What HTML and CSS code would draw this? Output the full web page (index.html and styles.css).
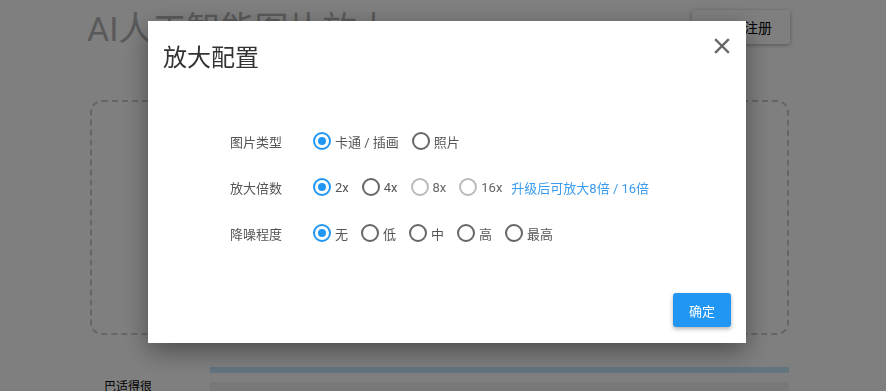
FILE: index.html
```html
<!DOCTYPE html>
<html lang="zh-CN">
<head>
    <meta charset="UTF-8">
    <title>AI人工智能图片放大</title>
    <link rel="stylesheet" href="styles.css">
</head>
<body>
    <div class="page">
        <header class="top">
            <h1>AI人工智能图片放大</h1>
            <button class="login">登录/注册</button>
        </header>
        <div class="drop"></div>
        <div class="review">
            <div class="who">巴适得很</div>
            <div class="lines">
                <div class="stripe"></div>
                <div class="grey"></div>
            </div>
        </div>
    </div>

    <div class="overlay">
        <div class="dialog">
            <div class="dialog-head">
                <h2>放大配置</h2>
                <span class="close">
                    <svg width="16" height="16" viewBox="0 0 16 16"><path d="M2 2L14 14M14 2L2 14" stroke="#666" stroke-width="2.4" stroke-linecap="square"/></svg>
                </span>
            </div>

            <div class="dialog-body">
                <div class="row">
                    <div class="label">图片类型</div>
                    <label class="radio on"><i></i>卡通 / 插画</label>
                    <label class="radio"><i></i>照片</label>
                </div>
                <div class="row">
                    <div class="label">放大倍数</div>
                    <label class="radio on"><i></i>2x</label>
                    <label class="radio"><i></i>4x</label>
                    <label class="radio off"><i></i>8x</label>
                    <label class="radio off"><i></i>16x</label>
                    <span class="tip">升级后可放大8倍 / 16倍</span>
                </div>
                <div class="row">
                    <div class="label">降噪程度</div>
                    <label class="radio on"><i></i>无</label>
                    <label class="radio"><i></i>低</label>
                    <label class="radio"><i></i>中</label>
                    <label class="radio"><i></i>高</label>
                    <label class="radio"><i></i>最高</label>
                </div>
            </div>

            <div class="dialog-foot">
                <button class="ok">确定</button>
            </div>
        </div>
    </div>
</body>
</html>
```

FILE: styles.css
```css
* {
    box-sizing: border-box;
}

body {
    margin: 0;
    font-family: Roboto, "Noto Sans CJK SC", sans-serif;
    background: #fff;
    color: #333;
    height: 391px;
    overflow: hidden;
}

.page {
    width: 699px;
    margin-left: 90px;
    padding-top: 10px;
}

.top {
    display: flex;
    justify-content: space-between;
    align-items: flex-start;
}

h1 {
    margin: 0;
    margin-left: -3px;
    font-size: 34px;
    font-weight: 400;
    color: #b4b4b4;
    line-height: 38px;
}

.login {
    width: 98px;
    height: 34px;
    border: none;
    border-radius: 3px;
    background: #fff;
    box-shadow: 0 1px 4px rgba(0,0,0,0.35);
    font-family: inherit;
    font-size: 14px;
    color: #000;
    margin-right: -1px;
}

.drop {
    margin-top: 52px;
    height: 235px;
    border: 2px dashed #ccc;
    border-radius: 12px;
}

.review {
    display: flex;
    margin-top: 32px;
    margin-left: 14px;
}

.who {
    width: 106px;
    padding-top: 10px;
    font-size: 12px;
    color: #000;
}

.lines {
    flex: 1;
}

.stripe {
    height: 6px;
    background: #c8e8ff;
}

.grey {
    margin-top: 9px;
    height: 20px;
    background: #f0f0f0;
}

.overlay {
    position: fixed;
    inset: 0;
    background: rgba(0,0,0,0.5);
}

.dialog {
    position: absolute;
    left: 148px;
    top: 21px;
    width: 598px;
    height: 322px;
    background: #fff;
    box-shadow: 0 8px 24px rgba(0,0,0,0.4);
    display: flex;
    flex-direction: column;
}

.dialog-head {
    display: flex;
    justify-content: space-between;
    padding: 22px 16px 0 15px;
}

h2 {
    margin: 0;
    font-size: 24px;
    font-weight: 400;
    line-height: 30px;
    color: #333;
}

.close {
    margin-top: -5px;
    line-height: 0;
}

.dialog-body {
    flex: 1;
    padding: 56px 0 0 82px;
}

.row {
    display: flex;
    align-items: center;
    height: 46px;
    margin-top: -11px;
    font-size: 13px;
    color: #555;
}

.row + .row {
    margin-top: 0;
}

.label {
    width: 83px;
    color: #555;
}

.radio {
    display: flex;
    align-items: center;
    margin-right: 13px;
    color: #555;
}

.radio i {
    width: 18px;
    height: 18px;
    border: 2px solid #666;
    border-radius: 50%;
    margin-right: 4px;
    position: relative;
}

.radio.on i {
    border-color: #2196f3;
}

.radio.on i::after {
    content: "";
    position: absolute;
    left: 3px;
    top: 3px;
    width: 8px;
    height: 8px;
    border-radius: 50%;
    background: #2196f3;
}

.radio.off i {
    border-color: #bbb;
}

.radio.off {
    color: #666;
}

.tip {
    margin-left: -4px;
    color: #3a9cf0;
    font-size: 13px;
}

.dialog-foot {
    display: flex;
    justify-content: flex-end;
    padding: 0 15px 16px 0;
}

.ok {
    width: 58px;
    height: 34px;
    border: none;
    border-radius: 3px;
    background: #2196f3;
    color: #fff;
    font-family: inherit;
    font-size: 13px;
    box-shadow: 0 2px 4px rgba(0,0,0,0.3);
}
```
